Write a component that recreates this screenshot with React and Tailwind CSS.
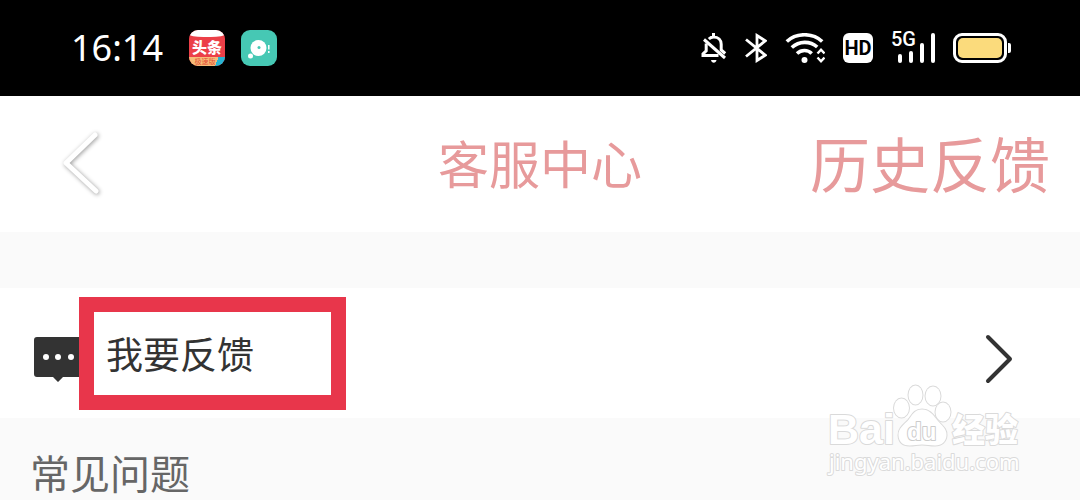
function BellOffIcon() {
  return (
    <svg viewBox="0 0 26 30" className="h-[30px] w-[26px]" fill="none" stroke="white" strokeWidth="3" aria-hidden="true">
      <path d="M12.500 0v3M7.800 6c1.400-1.300 3-2 4.900-2 4.600 0 7.500 3.200 7.500 7.300V17l4 3.500" />
      <path d="M5.200 10.500v7.300L2 20.800v1.700h15.500" />
      <path d="M3 6.500l21 18.500" />
      <path d="M10 27h5.500c-.5 3.500-5 3.500-5.500 0z" fill="white" stroke="none" />
    </svg>
  )
}

function BluetoothIcon() {
  return (
    <svg viewBox="0 0 22 30" className="h-[30px] w-[22px]" fill="none" stroke="white" strokeWidth="2.800" aria-hidden="true">
      <path d="M1 6.500l19.300 15.700L12 27.500v-25l8.300 5.300L1 23.500" />
    </svg>
  )
}

function WifiIcon() {
  return (
    <svg viewBox="0 0 40 30" className="h-[30px] w-10" fill="none" stroke="white" strokeWidth="3.600" aria-hidden="true">
      <path d="M1.800 8.500C11.500-.5 27.500-.5 37.200 8.500" />
      <path d="M6.800 14.500c7.300-6.800 18.300-6.800 25.400-.5" />
      <path d="M12 20.500c4.300-4 10.700-4 14.700 0" />
      <circle cx="19.500" cy="27" r="3" fill="white" stroke="none" />
      <path d="M32.500 20.500l3.500-3.700 3.500 3.700M32.500 24.500l3.500 3.700 3.500-3.700" strokeWidth="2.400" />
    </svg>
  )
}

function SignalBars() {
  return (
    <div className="relative flex h-[30px] w-11 items-end justify-end gap-[7px]">
      <span className="absolute -top-1 left-0 font-['Liberation_Sans_Narrow','Roboto',sans-serif] text-xl leading-5 font-medium">
        5G
      </span>
      <span className="h-[9px] w-1 rounded-xs bg-white" />
      <span className="h-3 w-1 rounded-xs bg-white" />
      <span className="h-5 w-1 rounded-xs bg-white" />
      <span className="h-[30px] w-1 rounded-xs bg-white" />
    </div>
  )
}

function Battery() {
  return (
    <div className="flex items-center gap-px">
      <div className="h-[30px] w-[54px] rounded-[9px] border-3 border-white p-0.5">
        <div className="h-full rounded-[5px] bg-[#fbdb7c]" />
      </div>
      <div className="h-2.5 w-[3px] rounded-r-xs bg-white" />
    </div>
  )
}

function StatusBar() {
  return (
    <div className="flex h-24 items-center justify-between bg-black pr-[69px] pl-[71px] text-white">
      <div className="flex items-center">
        <time className="font-['Noto_Sans',sans-serif] text-4xl">16:14</time>
        <div className="ml-[26px] flex h-9 w-9 flex-col overflow-hidden rounded-[9px] bg-[#ec3f48] text-center font-['Noto_Sans_CJK_SC',sans-serif]">
          <span className="h-[7px] rounded-b-[40%] bg-white" />
          <span className="text-[15px] leading-5 font-black">头条</span>
          <span className="h-[9px] bg-[linear-gradient(110deg,#f6bc78_75%,#27b4d3_75%)] pr-1 text-[7px] leading-[9px] text-[#e44c35]">极速版</span>
        </div>
        <svg viewBox="0 0 36 36" className="ml-4 h-9 w-9" aria-hidden="true">
          <rect width="36" height="36" rx="9" fill="#46c8b4" />
          <circle cx="17.500" cy="18" r="8" fill="white" />
          <circle cx="9.500" cy="26" r="2.500" fill="white" />
          <circle cx="18" cy="17.500" r="1.500" fill="#46c8b4" />
          <path d="M27.800 15v4.500M27.800 21v2" stroke="white" strokeWidth="1.500" />
        </svg>
      </div>
      <div className="flex items-center gap-[18px]">
        <BellOffIcon />
        <BluetoothIcon />
        <WifiIcon />
        <span className="flex h-[30px] w-[30px] items-center justify-center rounded-md bg-white font-['Liberation_Sans_Narrow','Roboto',sans-serif] text-xl font-bold text-black">
          HD
        </span>
        <SignalBars />
        <Battery />
      </div>
    </div>
  )
}

function Watermark() {
  return (
    <svg
      viewBox="820 380 210 100"
      className="pointer-events-none absolute top-[380px] right-[50px] h-[100px] w-[210px]"
      fill="white"
      stroke="#dadada"
      strokeWidth="2"
      paintOrder="stroke"
      strokeLinejoin="round"
    >
      <text x="828" y="444" fontSize="43" fontWeight="700" fontFamily="Liberation Sans, sans-serif">Bai</text>
      <ellipse cx="901.500" cy="408" rx="7.500" ry="9.500" />
      <ellipse cx="915.500" cy="395" rx="7" ry="9.500" />
      <ellipse cx="933" cy="396" rx="7.500" ry="9.500" />
      <ellipse cx="943" cy="412" rx="7.500" ry="9.500" />
      <path d="M922 409.500c-8 0-10 6-14 11-4 4-10 8-9.500 15 .5 7 5 10 11 10 5 0 8-1 12.500-1s8 1 13 1c7 0 11-4 11.500-10 .5-7-5-10-9-15-4-5-7.500-11-15.500-11z" />
      <text x="907" y="440" fontSize="24" fontWeight="700" fontFamily="Liberation Sans, sans-serif" stroke="#cccccc">du</text>
      <text x="952" y="442" fontSize="33" fontWeight="900" fontFamily="Noto Sans CJK SC, sans-serif">经验</text>
      <text x="829" y="470" fontSize="22" fontFamily="Noto Sans, sans-serif">jingyan.baidu.com</text>
    </svg>
  )
}

export default function App() {
  return (
    <div className="relative min-h-screen overflow-hidden bg-[#fafafa] font-['Noto_Sans_CJK_SC',sans-serif]">
      <StatusBar />
      <header className="grid h-[136px] grid-cols-[1fr_auto_1fr] items-center bg-white px-[30px] pb-1 text-[#e79a9b]">
        <button type="button" aria-label="返回" className="justify-self-start pl-[26px]">
          <svg
            viewBox="0 0 48 70"
            className="h-[70px] w-12 drop-shadow-[1px_1px_2px_rgba(0,0,0,0.4)]"
            fill="none"
            stroke="white"
            strokeWidth="5"
            strokeLinecap="round"
            strokeLinejoin="round"
          >
            <path d="M39 8L10 36l30 28" />
          </svg>
        </button>
        <h1 className="text-[51px] leading-[60px]">客服中心</h1>
        <a href="#history" className="justify-self-end text-[60px] leading-[60px] whitespace-nowrap">
          历史反馈
        </a>
      </header>
      <main className="pt-14">
        <a href="#feedback" className="flex h-[130px] items-center bg-white pt-3 pr-[66px] pl-[34px] text-[#333333]">
          <svg viewBox="0 0 49 45" className="h-[45px] w-[49px]" fill="#333333" aria-hidden="true">
            <path d="M3 0h43a3 3 0 0 1 3 3v34a3 3 0 0 1-3 3H29l-5 5-5-5H3a3 3 0 0 1-3-3V3a3 3 0 0 1 3-3z" />
            <g fill="white">
              <circle cx="12" cy="20" r="3" />
              <circle cx="24" cy="20" r="3" />
              <circle cx="37" cy="20" r="3" />
            </g>
          </svg>
          <span className="relative ml-[23px] pb-3 text-[37px] leading-[53px]">
            我要反馈
            <span className="absolute -top-[30px] -right-[92px] -bottom-[18px] -left-[27px] border-15 border-[#e8364b]" />
          </span>
          <svg
            viewBox="0 0 30 52"
            className="ml-auto h-[52px] w-[30px]"
            fill="none"
            stroke="#333333"
            strokeWidth="4"
            strokeLinecap="round"
            strokeLinejoin="round"
            aria-hidden="true"
          >
            <path d="M4 4l22 22L4 48" />
          </svg>
        </a>
        <h2 className="px-[30px] pt-6 text-[40px] leading-[60px] text-[#666666]">常见问题</h2>
      </main>
      <Watermark />
    </div>
  )
}
